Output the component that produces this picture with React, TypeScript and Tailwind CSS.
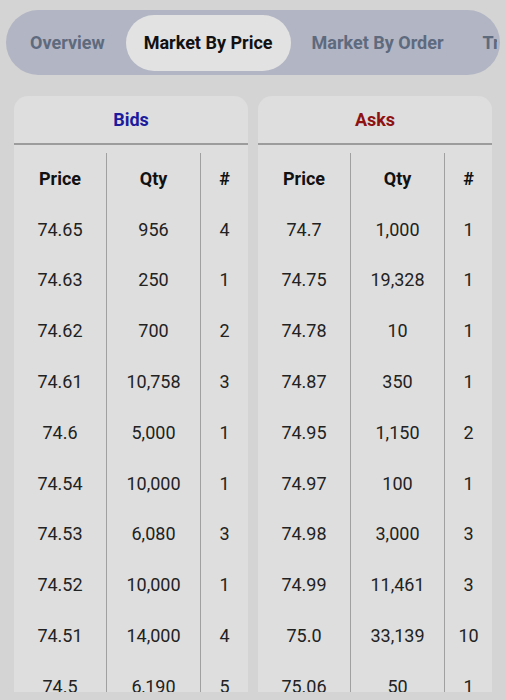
const tabs = ['Overview', 'Market By Price', 'Market By Order', 'Trades']

const bids: [string, string, string][] = [
  ['74.65', '956', '4'],
  ['74.63', '250', '1'],
  ['74.62', '700', '2'],
  ['74.61', '10,758', '3'],
  ['74.6', '5,000', '1'],
  ['74.54', '10,000', '1'],
  ['74.53', '6,080', '3'],
  ['74.52', '10,000', '1'],
  ['74.51', '14,000', '4'],
  ['74.5', '6,190', '5'],
]

const asks: [string, string, string][] = [
  ['74.7', '1,000', '1'],
  ['74.75', '19,328', '1'],
  ['74.78', '10', '1'],
  ['74.87', '350', '1'],
  ['74.95', '1,150', '2'],
  ['74.97', '100', '1'],
  ['74.98', '3,000', '3'],
  ['74.99', '11,461', '3'],
  ['75.0', '33,139', '10'],
  ['75.06', '50', '1'],
]

function BookSide({ title, color, rows }: { title: string; color: string; rows: [string, string, string][] }) {
  return (
    <div className="bg-[#dedede] rounded-t-[14px] flex flex-col min-h-0 overflow-hidden">
      {/* Header */}
      <div className={`h-[49px] shrink-0 flex items-center justify-center border-b-2 border-[#9c9c9c] text-[18px] font-bold ${color}`}>
        {title}
      </div>

      {/* Table */}
      <div className="pt-[8px] shrink-0 grid grid-cols-[93px_94px_47px]">
        {['Price', 'Qty', '#'].map((h, i) => (
          <div
            key={h}
            className={`h-[50.8px] flex items-center justify-center text-[18px] font-bold text-[#111] ${i < 2 ? 'border-r border-[#a0a0a0]' : ''}`}
          >
            {h}
          </div>
        ))}
        {rows.map((r, ri) =>
          r.map((c, i) => (
            <div
              key={ri + '-' + i}
              className={`h-[50.8px] flex items-center justify-center text-[18px] text-[#222] ${i < 2 ? 'border-r border-[#a0a0a0]' : ''}`}
            >
              {c}
            </div>
          ))
        )}
      </div>
    </div>
  )
}

export default function App() {
  return (
    <div className="w-[506px] h-[700px] bg-[#d4d4d4] overflow-hidden font-['Roboto',sans-serif]">
      {/* Tabs */}
      <div className="pt-[10px] px-[6px]">
        <div className="bg-[#b2b5c3] rounded-full h-[65px] pl-[6px] pr-[3px] py-[4px] flex items-center">
          <div className="flex-1 flex items-center gap-[3px] overflow-hidden whitespace-nowrap">
            {tabs.map((t, i) => (
              <div
                key={t}
                className={`h-[56px] px-[18px] flex items-center rounded-full text-[18px] font-bold shrink-0 ${
                  i === 1 ? 'bg-[#e2e2e2] text-[#111]' : 'text-[#5e6a7e]'
                }`}
              >
                {t}
              </div>
            ))}
          </div>
        </div>
      </div>

      {/* Book */}
      <div className="mt-[21px] px-[14px] grid grid-cols-2 gap-[10px] h-[596px] overflow-hidden">
        <BookSide title="Bids" color="text-[#1b1b9e]" rows={bids} />
        <BookSide title="Asks" color="text-[#8e1212]" rows={asks} />
      </div>
    </div>
  )
}
